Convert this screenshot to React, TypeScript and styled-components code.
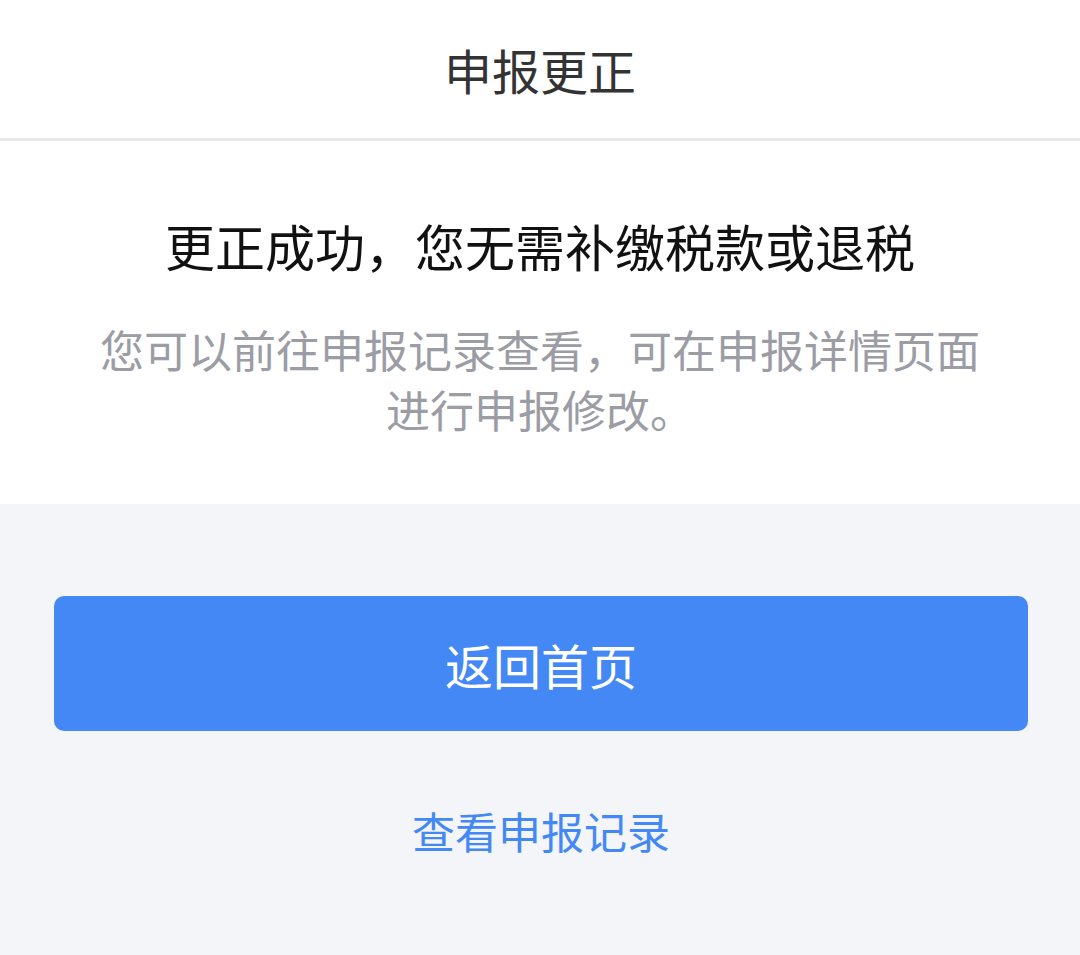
import React from "react";
import styled, { createGlobalStyle } from "styled-components";

const GlobalStyle = createGlobalStyle`
  html, body {
    margin: 0;
    padding: 0;
    background: #f4f5f9;
    font-family: "Noto Sans CJK SC", "Noto Sans", sans-serif;
  }
`;

const Page = styled.div`
  min-height: 955px;
  background: #f4f5f9;
`;

const Header = styled.div`
  height: 138px;
  line-height: 138px;
  text-align: center;
  background: #fff;
  border-bottom: 3px solid #e6e7ea;
  font-size: 48px;
  color: #333;
`;

const Result = styled.div`
  background: #fff;
  padding: 72px 80px 65px;
  text-align: center;
`;

const Heading = styled.div`
  font-size: 50px;
  line-height: 64px;
  color: #111;
`;

const Hint = styled.div`
  margin-top: 42px;
  font-size: 44px;
  line-height: 60px;
  color: #9b9ca4;
`;

const Actions = styled.div`
  padding: 92px 52px 0 54px;
  display: flex;
  flex-direction: column;
  align-items: stretch;
`;

const PrimaryButton = styled.button`
  height: 135px;
  border: 0;
  border-radius: 10px;
  background: #4388f5;
  color: #fff;
  font-family: inherit;
  font-size: 48px;
  cursor: pointer;
`;

const TextLink = styled.a`
  margin-top: 69px;
  font-size: 43px;
  line-height: 60px;
  text-align: center;
  color: #4388f5;
  text-decoration: none;
  cursor: pointer;
`;

export default function App() {
  return (
    <>
      <GlobalStyle />
      <Page>
        <Header>申报更正</Header>
        <Result>
          <Heading>更正成功，您无需补缴税款或退税</Heading>
          <Hint>您可以前往申报记录查看，可在申报详情页面进行申报修改。</Hint>
        </Result>
        <Actions>
          <PrimaryButton>返回首页</PrimaryButton>
          <TextLink>查看申报记录</TextLink>
        </Actions>
      </Page>
    </>
  );
}
